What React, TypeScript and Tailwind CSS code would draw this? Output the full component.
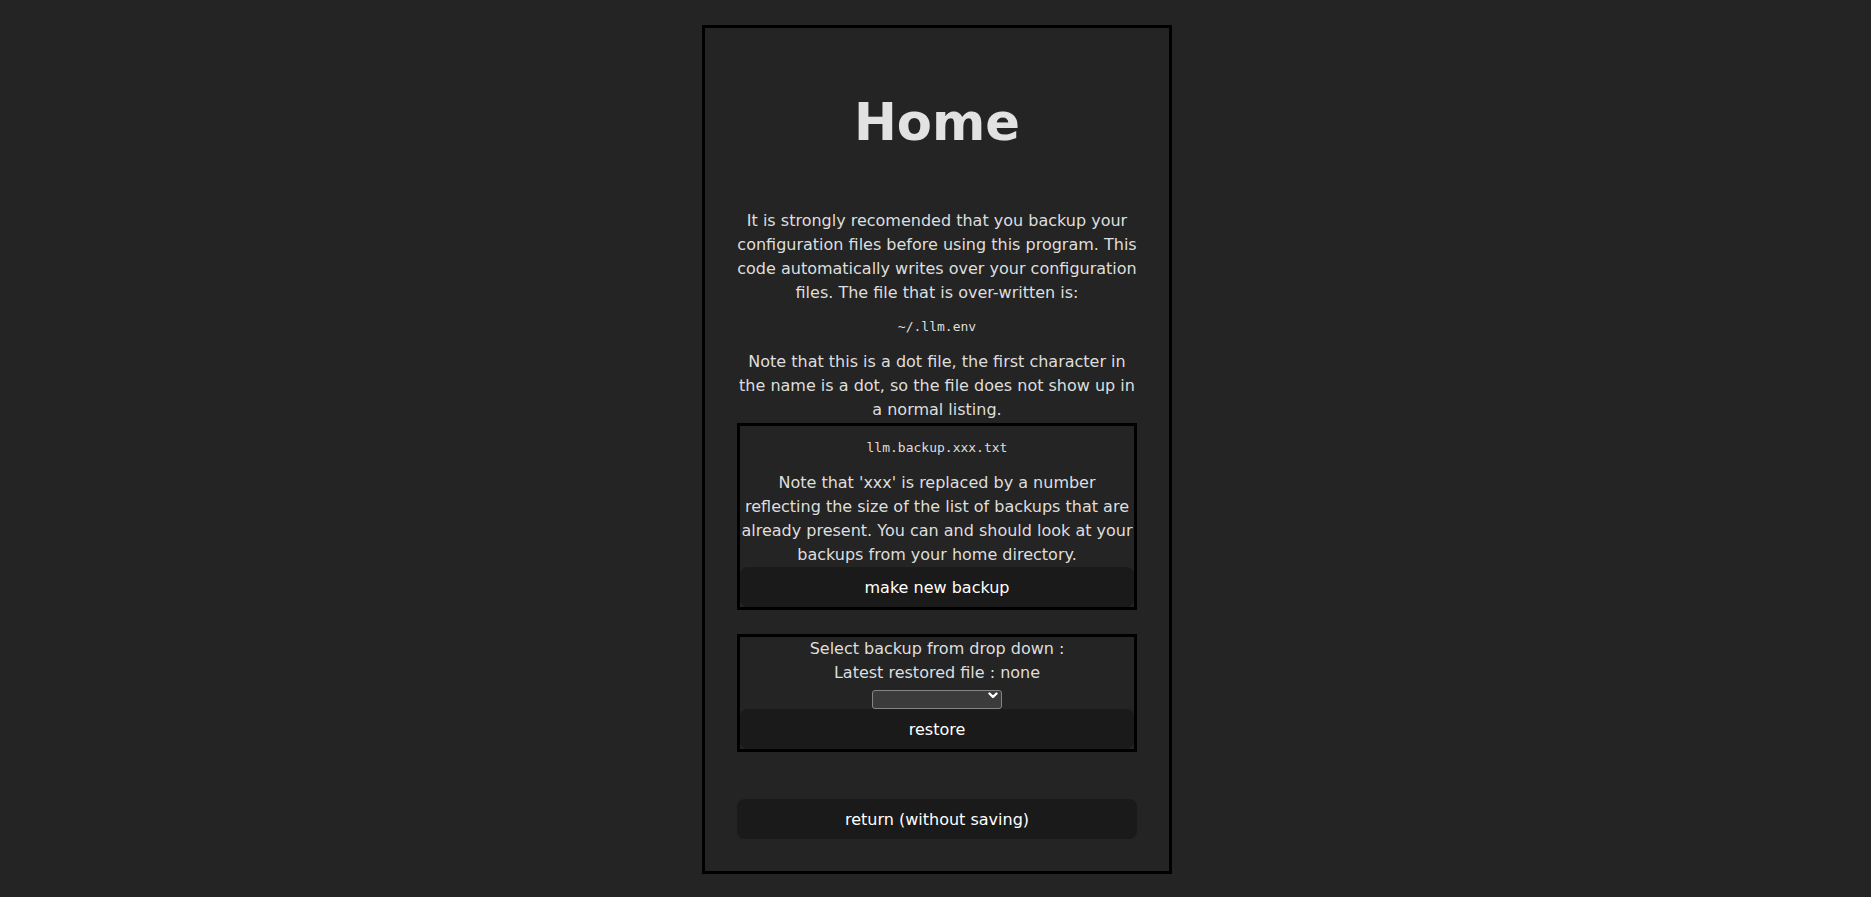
import * as React from "react";

export default function App() {
  const [backup, setBackup] = React.useState("");

  return (
    <div className="min-h-screen bg-[#242424] font-['DejaVu_Sans',sans-serif] text-[16px] leading-[1.5] text-[#dedede]">
      {/* page wrapper, card sits a hair right of centre like the original */}
      <div className="flex justify-center pl-[3px] pt-[25px]">
        <div className="flex w-[470px] flex-col border-[3px] border-black bg-[#242424] px-8 pt-8 pb-8 text-center">
          <h1 className="mt-[34px] text-[51.2px] font-bold leading-[1.1] text-[#e2e2e2]">Home</h1>

          <p className="mt-[59px]">
            It is strongly recomended that you backup your configuration files before using this
            program. This code automatically writes over your configuration files. The file that is
            over-written is:
          </p>
          <code className="mt-[12px] font-['DejaVu_Sans_Mono',monospace] text-[13px] leading-[1.5]">
            ~/.llm.env
          </code>
          <p className="mt-[13px]">
            Note that this is a dot file, the first character in the name is a dot, so the file does
            not show up in a normal listing.
          </p>

          {/* backup box */}
          <div className="mt-px flex flex-col border-[3px] border-black">
            <code className="mt-[12px] font-['DejaVu_Sans_Mono',monospace] text-[13px] leading-[1.5]">
              llm.backup.xxx.txt
            </code>
            <p className="mt-[14px]">
              Note that 'xxx' is replaced by a number reflecting the size of the list of backups that
              are already present. You can and should look at your backups from your home directory.
            </p>
            <button className="h-[40px] rounded-lg border border-transparent bg-[#1a1a1a] pt-[2px] text-white">
              make new backup
            </button>
          </div>

          {/* restore box */}
          <div className="mt-[24px] flex flex-col border-[3px] border-black">
            <div>Select backup from drop down :</div>
            <div>Latest restored file : none</div>
            <div className="mt-[2px] flex justify-center">
              <div className="relative h-[19px] w-[130px]">
                <select
                  value={backup}
                  onChange={(e) => setBackup(e.target.value)}
                  className="h-full w-full appearance-none rounded-[3px] border border-[#858585] bg-[#3b3b3b] text-[13px] leading-none text-white"
                >
                  <option value=""></option>
                </select>
                <svg
                  className="pointer-events-none absolute top-[5px] right-[4px]"
                  width="10"
                  height="7"
                  viewBox="0 0 10 7"
                  fill="none"
                >
                  <path d="M1.5 1.5 L5 5 L8.5 1.5" stroke="white" strokeWidth="2.4" strokeLinecap="round" strokeLinejoin="round" />
                </svg>
              </div>
            </div>
            <button className="mt-[3px] h-[40px] rounded-lg border border-transparent bg-[#1a1a1a] pt-[2px] text-white">
              restore
            </button>
          </div>

          <button className="mt-[47px] h-[40px] rounded-lg border border-transparent bg-[#1a1a1a] pt-px text-white">
            return (without saving)
          </button>
        </div>
      </div>
    </div>
  );
}
